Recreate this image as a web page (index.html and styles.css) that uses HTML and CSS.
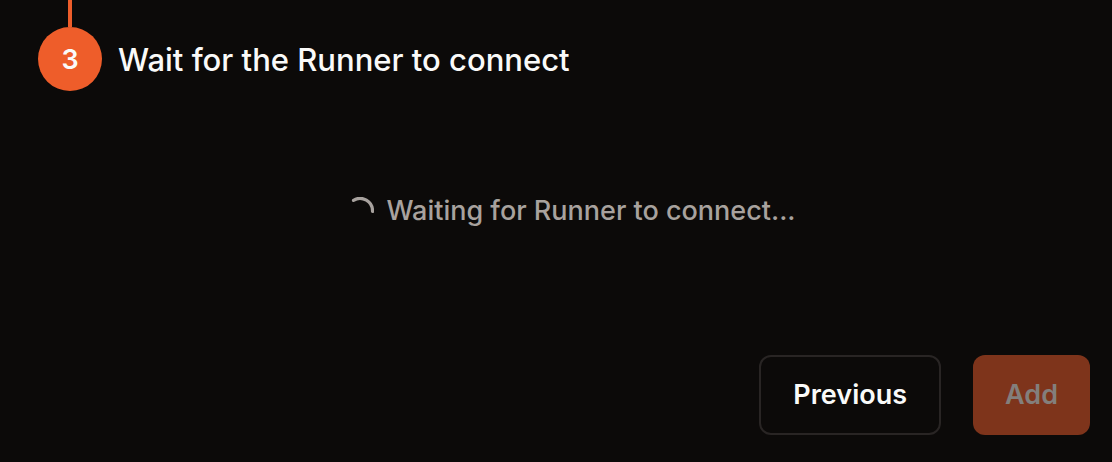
FILE: index.html
```html
<!DOCTYPE html>
<html lang="en">
<head>
<meta charset="utf-8">
<meta name="viewport" content="width=device-width, initial-scale=1">
<title>Add Runner</title>
<link rel="stylesheet" href="styles.css">
</head>
<body>
<main class="wizard">
  <section class="step">
    <div class="connector"></div>
    <header class="step-header">
      <span class="step-number">3</span>
      <h2 class="step-title">Wait for the Runner to connect</h2>
    </header>
    <div class="status" role="status">
      <svg class="spinner" viewBox="0 0 28 28" aria-hidden="true">
        <path d="M7.500 3.300A12.500 12.500 0 0 1 26.500 14.500" fill="none" stroke="currentColor" stroke-width="3.200" stroke-linecap="round"/>
      </svg>
      <span>Waiting for Runner to connect...</span>
    </div>
  </section>
  <footer class="actions">
    <button class="button button-outline" type="button">Previous</button>
    <button class="button button-primary" type="button" disabled>Add</button>
  </footer>
</main>
</body>
</html>
```

FILE: styles.css
```css
* {
  box-sizing: border-box;
}

body {
  margin: 0;
  background: #0c0a09;
  color: #fafaf9;
  font-family: Inter, "Liberation Sans", sans-serif;
}

.wizard {
  padding: 0 22px 27px 38px;
}

.connector {
  width: 4px;
  height: 27px;
  margin-left: 30px;
  background: #ee5d2a;
}

.step-header {
  display: flex;
  align-items: center;
  gap: 16px;
}

.step-number {
  display: flex;
  align-items: center;
  justify-content: center;
  width: 64px;
  height: 64px;
  border-radius: 50%;
  background: #ee5d2a;
  font-size: 27px;
  font-weight: 600;
}

.step-title {
  margin: 0;
  padding-top: 2px;
  font-size: 31px;
  line-height: 40px;
  font-weight: 550;
}

.status {
  display: flex;
  align-items: center;
  justify-content: center;
  gap: 12px;
  padding: 100px 0 124px 14px;
  color: #a8a29e;
  font-size: 27px;
  line-height: 40px;
  font-weight: 450;
}

.spinner {
  width: 28px;
  height: 28px;
}

.actions {
  display: flex;
  justify-content: flex-end;
  gap: 32px;
}

.button {
  height: 80px;
  padding: 0 32px;
  border: 2px solid transparent;
  border-radius: 12px;
  color: inherit;
  font: 600 27px/40px Inter, "Liberation Sans", sans-serif;
}

.button-outline {
  border-color: #292524;
  background: transparent;
}

.button-primary {
  border: 0;
  background: #7e341b;
  color: #837f7c;
}
```
